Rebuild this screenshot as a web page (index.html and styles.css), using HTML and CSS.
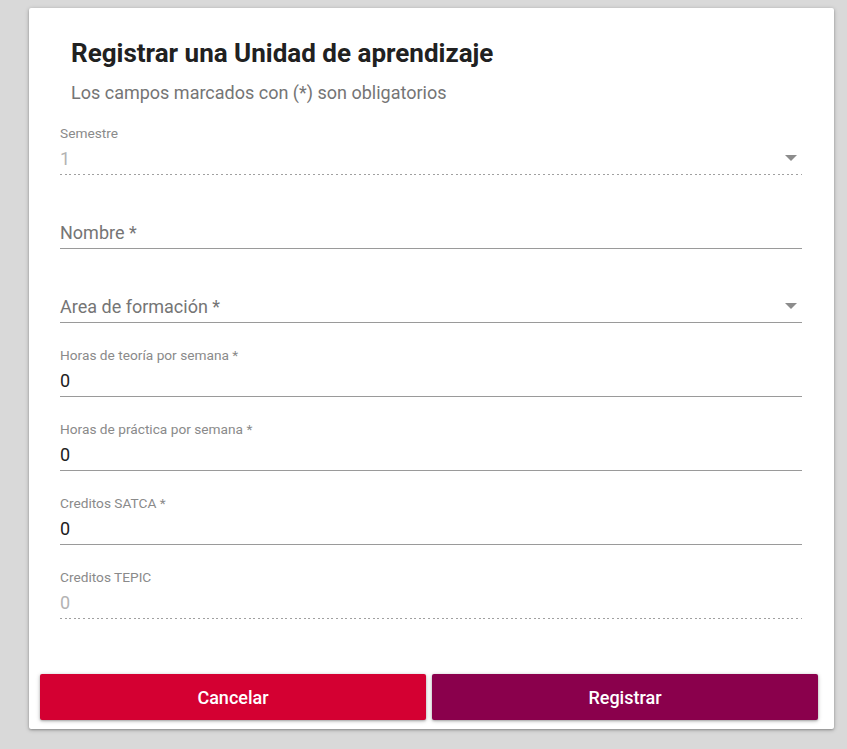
FILE: index.html
```html
<!DOCTYPE html>
<html lang="es">
<head>
<meta charset="utf-8">
<title>Registrar una Unidad de aprendizaje</title>
<link rel="stylesheet" href="styles.css">
</head>
<body>
<div class="card">
  <header class="header">
    <h1 class="title">Registrar una Unidad de aprendizaje</h1>
    <p class="subtitle">Los campos marcados con (*) son obligatorios</p>
  </header>
  <form class="form">
    <div class="field field--disabled">
      <div class="label">Semestre</div>
      <div class="row"><span class="value">1</span><svg class="arrow" width="12" height="6" viewBox="0 0 12 6"><polygon points="0,0 12,0 6,6"/></svg></div>
    </div>
    <div class="field field--empty">
      <div class="row"><span class="placeholder">Nombre *</span></div>
    </div>
    <div class="field field--empty">
      <div class="row"><span class="placeholder">Area de formación *</span><svg class="arrow" width="12" height="6" viewBox="0 0 12 6"><polygon points="0,0 12,0 6,6"/></svg></div>
    </div>
    <div class="field">
      <div class="label">Horas de teoría por semana *</div>
      <div class="row"><span class="value">0</span></div>
    </div>
    <div class="field">
      <div class="label">Horas de práctica por semana *</div>
      <div class="row"><span class="value">0</span></div>
    </div>
    <div class="field">
      <div class="label">Creditos SATCA *</div>
      <div class="row"><span class="value">0</span></div>
    </div>
    <div class="field field--disabled">
      <div class="label">Creditos TEPIC</div>
      <div class="row"><span class="value">0</span></div>
    </div>
  </form>
  <div class="actions">
    <button class="btn btn--cancel" type="button">Cancelar</button>
    <button class="btn btn--submit" type="button">Registrar</button>
  </div>
</div>
</body>
</html>
```

FILE: styles.css
```css
* { box-sizing: border-box; }
html, body { margin: 0; }
body {
  background: #d9d9d9;
  font-family: Roboto, "Liberation Sans", Arial, sans-serif;
  padding: 8px 13px 0 29px;
  height: 749px;
  overflow: hidden;
}
.card {
  width: 805px;
  height: 721px;
  background: #fff;
  border-radius: 2px;
  box-shadow: 0 1px 4px rgba(0,0,0,0.25), 0 1px 2px rgba(0,0,0,0.2);
  display: flex;
  flex-direction: column;
}
.header { padding: 29px 42px 0; }
.title {
  margin: 0;
  font-size: 26px;
  line-height: 32px;
  font-weight: 700;
  color: #212121;
}
.subtitle {
  margin: 15px 0 0;
  font-size: 18px;
  line-height: 17px;
  color: #757575;
}
.form { padding: 0 32px 0 31px; }
.field {
  padding-top: 25px;
  padding-bottom: 3px;
  border-bottom: 1px solid #9a9a9a;
}
.field--empty { padding-top: 46px; }
.field--disabled {
  border-bottom: none;
  padding-bottom: 4px;
  background-image: repeating-linear-gradient(to right, #a0a0a0 0, #a0a0a0 2px, transparent 2px, transparent 4.6px);
  background-size: 100% 1px;
  background-repeat: no-repeat;
  background-position: left bottom;
}
.label {
  font-size: 13.7px;
  line-height: 15px;
  color: #8a8a8a;
  margin-bottom: 6px;
}
.row {
  display: flex;
  align-items: center;
  justify-content: space-between;
  height: 24px;
}
.value {
  font-size: 18px;
  line-height: 24px;
  color: #212121;
}
.field--disabled .value { color: #b3b3b3; }
.placeholder {
  font-size: 18px;
  line-height: 24px;
  color: #757575;
}
.arrow {
  fill: #8c8c8c;
  margin-right: 5px;
  margin-bottom: 3px;
}
.actions {
  margin-top: auto;
  padding: 0 16px 9px 11px;
  display: flex;
  gap: 6px;
}
.btn {
  flex: 1;
  height: 46px;
  border: none;
  border-radius: 2px;
  color: #fff;
  font-family: Roboto, "Liberation Sans", Arial, sans-serif;
  font-size: 18px;
  font-weight: 500;
  box-shadow: 0 1px 4px rgba(0,0,0,0.25), 0 1px 2px rgba(0,0,0,0.2);
  cursor: pointer;
}
.btn--cancel { background: #d40032; }
.btn--submit { background: #8a004c; }
```
